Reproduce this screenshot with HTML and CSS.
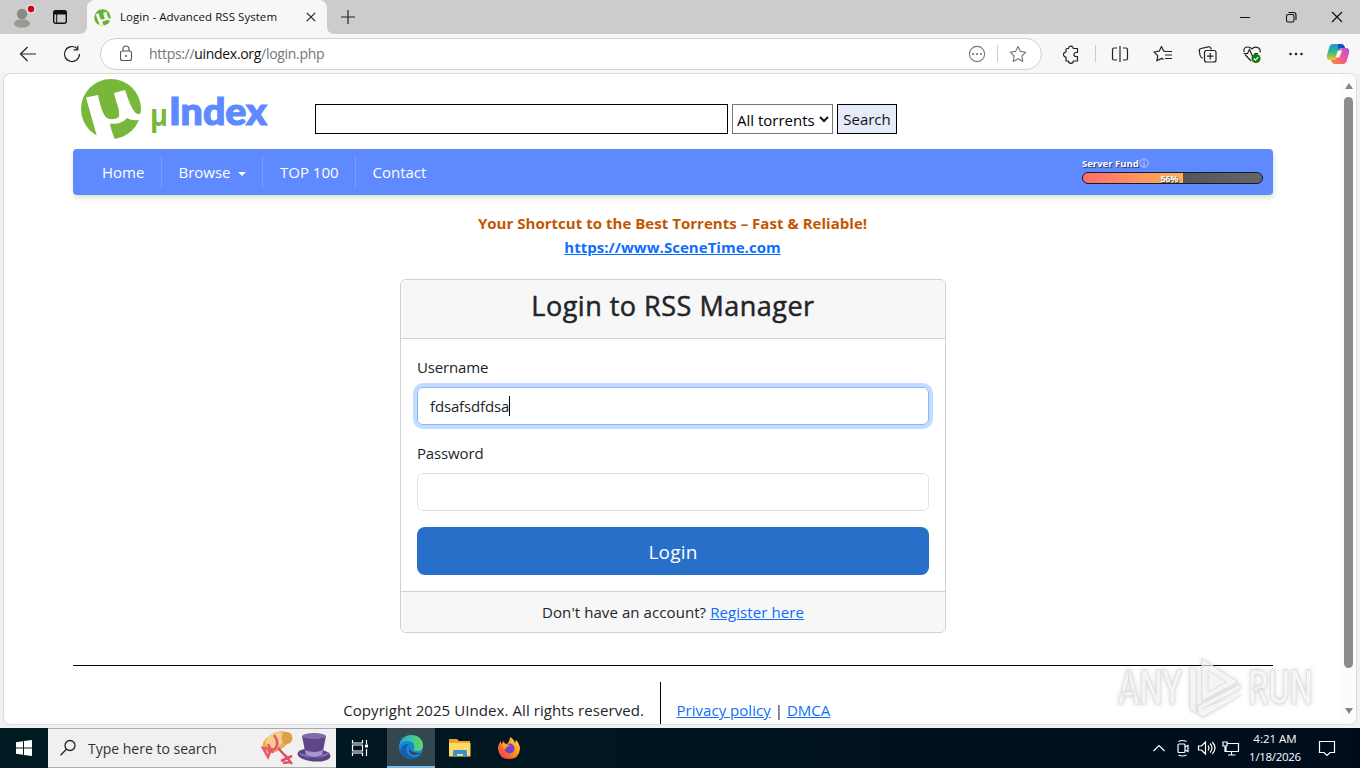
FILE: index.html
```html
<!DOCTYPE html>
<html lang="en">
<head>
    <meta charset="UTF-8">
    <meta name="viewport" content="width=device-width, initial-scale=1.0">
    <title>Login - Advanced RSS System</title>
    <link rel="stylesheet" href="styles.css">
</head>
<body>
    <div class="tab-strip">
        <div class="strip-left">
            <svg class="profile" width="28" height="28" viewBox="0 0 28 28">
                <circle cx="14" cy="11" r="5.2" fill="#8c8985"/>
                <ellipse cx="14" cy="20.5" rx="8" ry="4.3" fill="#9c9894"/>
                <circle cx="23" cy="6" r="4.8" fill="#dedede"/>
                <circle cx="23" cy="6" r="3.2" fill="#d0021b"/>
            </svg>
            <svg class="workspaces" width="16" height="16" viewBox="0 0 16 16">
                <rect x="1.7" y="1.7" width="12.6" height="12.6" rx="2" fill="none" stroke="#111" stroke-width="1.4"/>
                <path d="M2 2h12v3H2zM4.7 4v10" fill="#111" stroke="#111"/>
            </svg>
        </div>
        <div class="tab">
            <svg width="17" height="17" viewBox="0 0 62 62">
                <circle cx="31" cy="31" r="30" fill="#62b52b"/>
                <path d="M6 18L18 16Q21 36 28 38Q35 40 39 36Q35 24 34 13L46 11Q49 28 54 34Q57 37 62 35V41Q53 43 46 39Q40 46 30 45Q32 55 37 61L22 59Q12 38 6 18" fill="#f7f7f7"/>
            </svg>
            <span class="tab-title">Login - Advanced RSS System</span>
            <svg width="10" height="10" viewBox="0 0 10 10"><path d="M.8.8l8.4 8.4M9.2.8L.8 9.2" stroke="#222" stroke-width="1.2"/></svg>
        </div>
        <svg class="new-tab" width="14" height="14" viewBox="0 0 14 14"><path d="M7 0v14M0 7h14" stroke="#222" stroke-width="1.2"/></svg>
        <div class="window-buttons">
            <svg width="46" height="34" viewBox="0 0 46 34"><path d="M18 17.5h10" stroke="#111"/></svg>
            <svg width="46" height="34" viewBox="0 0 46 34"><g fill="none" stroke="#111" stroke-width="1.1"><rect x="18.5" y="14.5" width="7.5" height="7.5" rx="1.5"/><path d="M20.5 12.5h5q2.5 0 2.5 2.5v5"/></g></svg>
            <svg width="46" height="34" viewBox="0 0 46 34"><path d="M18 12l10 10M28 12L18 22" stroke="#111" stroke-width="1.2"/></svg>
        </div>
    </div>

    <div class="toolbar">
        <svg class="tool" viewBox="0 0 44 40"><path d="M30 20H15M21.5 13l-7 7 7 7" class="line"/></svg>
        <svg class="tool" viewBox="0 0 44 40"><path d="M29.5 20a7.5 7.5 0 1 1-2.4-5.5M27.8 11.8v4h-4.2" class="line"/></svg>
        <div class="address">
            <svg width="50" height="30" viewBox="0 0 50 30"><g fill="none" stroke="#555" stroke-width="1.1"><rect x="19.5" y="12" width="11" height="9.5" rx="2"/><path d="M22 12v-2a3 3 0 0 1 6 0v2"/></g><circle cx="25" cy="17" r="1" fill="#555"/></svg>
            <span class="url">https://<b>uindex.org</b>/login.php</span>
            <svg width="40" height="30" viewBox="0 0 40 30"><circle cx="20" cy="15" r="7.6" fill="none" stroke="#777" stroke-width="1.1"/><g fill="#666"><circle cx="16" cy="15" r="1"/><circle cx="20" cy="15" r="1"/><circle cx="24" cy="15" r="1"/></g></svg>
            <span class="divider"></span>
            <svg class="star" width="43" height="30" viewBox="0 0 43 30"><path d="M20 7.5l2.4 4.9 5.4.8-3.9 3.8.9 5.4-4.8-2.6-4.8 2.6.9-5.4-3.9-3.8 5.4-.8z" fill="none" stroke="#777" stroke-width="1.1" stroke-linejoin="round"/></svg>
        </div>
        <svg class="tool ext" viewBox="0 0 44 40"><path d="M18 14.5h1.5a2.4 2.4 0 1 1 4.8 0h4.2v4H27a2 2 0 1 0 0 4h1.5V27h-4.2a2.4 2.4 0 0 1-4.8 0H17v-4a2.5 2.5 0 1 1 0-5v-2.5q0-1 1-1z" class="line" stroke-linejoin="round"/></svg>
        <span class="divider"></span>
        <svg class="tool split" viewBox="0 0 44 40"><path d="M19 14h-3q-1.500 0-1.500 1.500v9q0 1.500 1.500 1.500h3M25 14h3q1.500 0 1.500 1.500v9q0 1.500-1.500 1.500h-3M22 12v16" class="line"/></svg>
        <svg class="tool" viewBox="0 0 44 40"><path d="M24 17.500l-2.200-.3-2.300-4.700-2.300 4.700-5.200.8 3.800 3.600-1 5.200 4.700-2.400 2 1M24 17.500h6M23 21h7M23 24.500h7" class="line" stroke-linejoin="round"/></svg>
        <svg class="tool" viewBox="0 0 44 40"><path d="M17 24h-1q-1.500-.5-2-3l-.7-4q-.3-2 1.700-2.500l7.500-1.700q2-.3 2.500 1.700l.3 1M19 16.500h9q2 0 2 2v7.500q0 2-2 2h-7.500q-2 0-2-2v-7.500q0-2 2-2M24.200 19v6.500M21 22.200h6.500" class="line"/></svg>
        <svg class="tool" viewBox="0 0 44 40"><path d="M21 27l-6-6.500M14 18q-1-5 4-5 2.500 0 4 2 2-2.500 5-1.700 4 1 3 5.200M13.500 19.500h4l2-4 3.500 8 2-4h3" class="line"/><circle cx="26" cy="24.500" r="4.600" fill="#107c10"/><path d="M23.800 24.500l1.600 1.700 2.800-3" fill="none" stroke="#fff" stroke-width="1.200"/></svg>
        <svg class="tool" viewBox="0 0 44 40"><g fill="#222"><circle cx="16.500" cy="20" r="1.300"/><circle cx="22" cy="20" r="1.300"/><circle cx="27.500" cy="20" r="1.300"/></g></svg>
        <svg class="copilot" width="40" height="40" viewBox="0 0 40 40">
            <defs>
                <linearGradient id="cpA" x1="0" y1="0" x2="0" y2="1"><stop offset="0" stop-color="#1793e8"/><stop offset=".5" stop-color="#35b98a"/><stop offset="1" stop-color="#f3c820"/></linearGradient>
                <linearGradient id="cpB" x1="0" y1="1" x2="1" y2="0"><stop offset="0" stop-color="#ff8b32"/><stop offset=".5" stop-color="#f0588d"/><stop offset="1" stop-color="#a858e8"/></linearGradient>
            </defs>
            <path d="M15 10h8q3 0 4 4h-3q-2 0-3 3l-2 6q-1 3-4 3h-3q-4 0-3-5l2-7q1-4 4-4z" fill="url(#cpA)"/>
            <path d="M20 10h3q3 0 4 4h-4q-2 0-3 2z" fill="#174ec4"/>
            <path d="M25 30h-8q-3 0-4-4h3q2 0 3-3l2-6q1-3 4-3h3q4 0 3 5l-2 7q-1 4-4 4z" fill="url(#cpB)"/>
            <path d="M20 16.500h4l-2.500 7h-4z" fill="#f7f7f7"/>
        </svg>
    </div>

    <div class="window">
        <div class="page">
            <div class="container">
                <div class="site-header">
                    <svg class="logo" width="200" height="70" viewBox="0 0 200 70">
                        <circle cx="38" cy="35" r="30" fill="#77b83b"/>
                        <path d="M13 23.500L25 21Q29 41 34 44Q40 47 46 43Q47 37 43 27L41 19L52 16Q57 32 62 38.500Q64 41 69 39V45Q61 48 54 44Q48 51 37 49.500Q38 56 42 66L33 68L25 66Q19 45 13 23.500" fill="#fff"/>
                        <text x="77" y="52" class="logo-mu" textLength="18" lengthAdjust="spacingAndGlyphs">µ</text>
                        <text x="96" y="51" class="logo-name" textLength="98" lengthAdjust="spacingAndGlyphs">Index</text>
                    </svg>
                    <form class="search">
                        <input type="text" class="search-text">
                        <div class="search-select"><span>All torrents</span><svg width="10" height="7" viewBox="0 0 10 7"><path d="M1 1l4 4 4-4" fill="none" stroke="#111" stroke-width="2"/></svg></div>
                        <button type="button" class="search-btn">Search</button>
                    </form>
                </div>

                <div class="navbar">
                    <a class="nav-home">Home</a>
                    <a class="nav-browse">Browse <i class="caret"></i></a>
                    <a class="nav-top">TOP 100</a>
                    <a class="nav-contact">Contact</a>
                    <div class="fund">
                        <div class="fund-title">Server Fund<svg width="10" height="10" viewBox="0 0 10 10"><circle cx="5" cy="5" r="4.200" fill="none" stroke="#cbd8ff" stroke-width=".8"/><path d="M5 4.500V8M5 2.200v1.200" stroke="#cbd8ff"/></svg></div>
                        <div class="fund-bar"><div class="fund-fill" style="width: 56%">56%</div></div>
                    </div>
                </div>

                <div class="promo">
                    <div>Your Shortcut to the Best Torrents – Fast &amp; Reliable!</div>
                    <a>https://www.SceneTime.com</a>
                </div>

                <div class="card">
                    <h3 class="card-header">Login to RSS Manager</h3>
                    <div class="card-body">
                        <label>Username</label>
                        <div class="field focused">fdsafsdfdsa<span class="cursor"></span></div>
                        <label>Password</label>
                        <div class="field"></div>
                        <button type="button" class="login-btn">Login</button>
                    </div>
                    <div class="card-footer">Don't have an account? <a>Register here</a></div>
                </div>

                <div class="footer">
                    <div class="copyright">Copyright 2025 UIndex. All rights reserved.</div>
                    <div class="footer-links"><a class="privacy">Privacy policy</a> | <a>DMCA</a></div>
                </div>
            </div>
        </div>
        <div class="scrollbar">
            <i class="arrow-up"></i>
            <div class="thumb"></div>
            <i class="arrow-down"></i>
        </div>
    </div>

    <svg class="watermark" width="220" height="70" viewBox="0 0 220 70">
        <g class="mark">
            <text x="4" y="49" textLength="64" lengthAdjust="spacingAndGlyphs">ANY</text>
            <text x="134" y="49" textLength="65" lengthAdjust="spacingAndGlyphs">RUN</text>
            <path d="M76 12v42l6 4V14zM88 4v42l36-19zM94 15v22l18-10zM88 54l38-20v-5L84 51v8l5 3 38-22"/>
        </g>
    </svg>

    <div class="taskbar">
        <div class="start"><svg width="16" height="16" viewBox="0 0 16 16"><path d="M0 2.200L7 1.200V7.500H0zM8 1L16 0V7.500H8zM0 8.500H7V14.800L0 13.800zM8 8.500H16V16L8 15z" fill="#fff"/></svg></div>
        <div class="task-search">
            <svg width="18" height="18" viewBox="0 0 18 18"><g fill="none" stroke="#222" stroke-width="1.300"><circle cx="11" cy="6.500" r="5"/><path d="M7.400 10.300L1.500 16.200"/></g></svg>
            <span>Type here to search</span>
            <svg class="hats" width="72" height="36" viewBox="0 0 72 36">
                <ellipse cx="16" cy="12" rx="15" ry="9" fill="#e9ad55" transform="rotate(-30 16 12)"/>
                <ellipse cx="15" cy="10" rx="10" ry="7" fill="#f5cf8b" transform="rotate(-35 15 10)"/>
                <ellipse cx="27" cy="8" rx="5.500" ry="6" fill="#dda04a"/>
                <path d="M14 5q6 8 1 14l-7 2M8 14l5 9M3 18l8 1-3 8z" fill="none" stroke="#e8576c" stroke-width="2.500"/>
                <path d="M18 18l11 12M21 31l11-5M25 25l7 9M23 33l8-1" stroke="#df4d68" stroke-width="2.500"/>
                <ellipse cx="54" cy="25" rx="16.500" ry="6.500" fill="#594184" transform="rotate(4 54 25)"/>
                <path d="M38 22q15 7 32 0-4 6-16 6t-16-6" fill="#8871b4"/>
                <path d="M42 6l4 20q8 4 16 0l4-20z" fill="#5d4788"/>
                <path d="M45 20q9 4 18 0l-1 5q-8 4-16 0z" fill="#a894cf"/>
                <ellipse cx="54" cy="6" rx="12" ry="3" fill="#806aa9"/>
            </svg>
        </div>
        <div class="task-app"><svg width="20" height="18" viewBox="0 0 20 18"><g fill="none" stroke="#fff" stroke-width="1.200"><path d="M2.500 1v3h10V1M2.500 17v-3h10v3M2.500 6h10v6h-10zM16.500 1v4M16.500 10v7"/></g><path d="M15 5.500h3v3h-3z" fill="#fff"/></svg></div>
        <div class="task-app active">
            <svg width="26" height="26" viewBox="0 0 26 26">
                <defs><linearGradient id="edgeTop"><stop offset="0" stop-color="#20a5df"/><stop offset="1" stop-color="#63d960"/></linearGradient></defs>
                <circle cx="13" cy="13" r="12" fill="#1687d6"/>
                <path d="M1 12Q3 1 14 1q11 1 11 11 0 5-6 5-4 0-3-2 2-8-8-8-5 1-7 5" fill="url(#edgeTop)"/>
                <path d="M11 10q-5 5-1 10 4 5 12 2-3 3-9 3Q4 25 2 17q2-8 9-7" fill="#155eae"/>
                <path d="M12 12q-2 7 11 7 1 0 1-1-6 5-11 2-3-3-1-8" fill="#36474f"/>
            </svg>
        </div>
        <div class="task-app"><svg width="24" height="20" viewBox="0 0 24 20"><path d="M1 1h8l2 2h11v15H1z" fill="#e9a52b"/><path d="M1 5h21.500v13.500H1z" fill="#ffd866"/><path d="M5 19v-6q0-1 1-1h12q1 0 1 1v6h-4v-3H9v3z" fill="#3594cf"/></svg></div>
        <div class="task-app"><svg width="24" height="24" viewBox="0 0 24 24"><defs><linearGradient id="fox" x1="1" y1="0" x2="0" y2="1"><stop offset="0" stop-color="#ffe34a"/><stop offset=".5" stop-color="#ff8b1d"/><stop offset="1" stop-color="#ee2660"/></linearGradient></defs><path d="M13 1q4 2 5 6l1-3q4 4 4 9-1 10-11 10Q2 23 1 13q0-5 3-8v3l3-3q0 3 3 3 3-3 3-7" fill="url(#fox)"/><circle cx="12.500" cy="12.500" r="5" fill="#7440cf"/><path d="M5 9q4-3 8 1-4 0-4 3-3 0-4-4" fill="#ff9f24"/></svg></div>
        <div class="tray">
            <svg width="24" height="24" viewBox="0 0 24 24"><path d="M6.500 15l5.500-5.500 5.500 5.500"/></svg>
            <svg width="24" height="24" viewBox="0 0 24 24"><rect x="7" y="8" width="7" height="8.500" rx="1"/><path d="M14 11l3-1.500v6L14 14M7.500 5.500q4-2 8 0M7.500 19q4 2 8 0"/></svg>
            <svg width="24" height="24" viewBox="0 0 24 24"><path d="M3.500 10h3l4-4v12l-4-4h-3zM13 9.500q2 2.500 0 5M15 7.500q4 4.500 0 9M17.300 6q5.400 6 0 12"/></svg>
            <svg width="24" height="24" viewBox="0 0 24 24"><path d="M8 7.500h11.500v8H7V11M12.500 15.500v3.500M9 19h7.500M4 6h4v4H4zM6 10v6"/></svg>
            <div class="clock"><span class="time">4:21 AM</span><span>1/18/2026</span></div>
            <svg class="notify" width="18" height="18" viewBox="0 0 18 18"><path d="M1.500 2.500h15v11h-4.500L9 16.500l-3-3H1.500z"/></svg>
        </div>
    </div>
</body>
</html>
```

FILE: styles.css
```css
* {
    box-sizing: border-box;
}

body {
    margin: 0;
    width: 1360px;
    height: 768px;
    overflow: hidden;
    display: flex;
    flex-direction: column;
    background: #f0f1f4;
    color: #212529;
    font-family: "Open Sans", "Noto Sans", sans-serif;
    font-size: 15px;
}

svg {
    flex-shrink: 0;
    display: block;
}

/* browser chrome */
.tab-strip {
    height: 34px;
    display: flex;
    align-items: center;
    background: #f7f7f7;
}

.tab-strip > * {
    background: #ccc;
}

.strip-left {
    width: 87px;
    height: 34px;
    display: flex;
    align-items: center;
    padding-left: 8px;
    gap: 16px;
    border-bottom-right-radius: 7px;
}

.tab {
    width: 240px;
    height: 34px;
    display: flex;
    align-items: center;
    padding: 0 11px 0 7px;
    background: #f7f7f7;
    border-radius: 8px 8px 0 0;
    box-shadow: 0 -8px 0 #ccc;
}

.tab-title {
    flex: 1;
    margin: -2px 0 0 9px;
    font-size: 11.5px;
    letter-spacing: 0.05px;
    color: #111;
}

.new-tab {
    box-sizing: content-box;
    padding: 10px 14px;
    border-bottom-left-radius: 7px;
}

.window-buttons {
    flex: 1;
    height: 34px;
    display: flex;
    justify-content: flex-end;
}

.toolbar {
    height: 39px;
    display: flex;
    align-items: center;
    padding-left: 6px;
    background: #f7f7f7;
}

.tool {
    width: 44px;
    height: 40px;
}

.ext {
    margin: 0 2px 0 7px;
}

.split {
    margin-left: 2px;
}

.line {
    fill: none;
    stroke: #222;
    stroke-width: 1.2;
}

.address {
    width: 942px;
    height: 32px;
    margin-left: 6px;
    display: flex;
    align-items: center;
    background: #fff;
    border: 1px solid #d0d0d0;
    border-radius: 16px;
}

.url {
    flex: 1;
    margin-left: -2px;
    font-size: 14px;
    letter-spacing: -0.31px;
    color: #767676;
}

.url b {
    font-weight: 400;
    color: #111;
}

.divider {
    width: 1px;
    height: 17px;
    background: #ccc;
}

.window {
    height: 652px;
    margin: 0 3px 3px;
    display: flex;
    overflow: hidden;
    background: #fff;
    border: 1px solid #dcdcdc;
    border-radius: 8px;
}

.page {
    flex: 1;
    display: flex;
    justify-content: center;
}

.container {
    width: 1200px;
}

.scrollbar {
    width: 15px;
    margin-left: -1px;
    display: flex;
    flex-direction: column;
    align-items: center;
    padding: 9px 0 10px;
    background: #fcfcfc;
}

.thumb {
    width: 9px;
    height: 571px;
    margin: 8px 0 auto;
    border-radius: 5px;
    background: #8b8b8b;
}

.arrow-up,
.arrow-down {
    border: 4.5px solid transparent;
    border-top-width: 0;
    border-bottom: 6px solid #858585;
}

.arrow-down {
    transform: rotate(180deg);
}

/* site header */
.site-header {
    height: 75px;
    display: flex;
}

.logo-mu {
    font-family: "Open Sans", sans-serif;
    font-size: 30px;
    font-weight: 700;
    fill: #77b83b;
}

.logo-name {
    font-family: Lato, sans-serif;
    font-size: 37px;
    font-weight: 900;
    fill: #5d8aff;
    stroke: #5d8aff;
    stroke-width: 1.2;
}

.search {
    height: 30px;
    margin: 30px 0 0 42px;
    display: flex;
}

.search-text {
    width: 413px;
    border: 1px solid #000;
    padding: 0;
}

.search-select {
    width: 101px;
    margin: 0 4px;
    padding: 1px 3px 0 4px;
    display: flex;
    align-items: center;
    justify-content: space-between;
    border: 1px solid #767676;
    color: #000;
}

.search-select span {
    white-space: nowrap;
}

.search-btn {
    width: 60px;
    padding: 0;
    border: 1px solid #000;
    background: #e5ebf9;
    color: #111;
    font: inherit;
}

.navbar {
    height: 46px;
    display: flex;
    align-items: center;
    padding: 0 10px 0 12px;
    background: #5f8aff;
    border-radius: 4px;
    box-shadow: 1px 3px 5px #d4e8d0;
    color: #fff;
}

.navbar > a {
    height: 34px;
    padding-left: 17px;
    line-height: 34px;
    border-right: 1px solid #789cff;
}

.navbar .nav-home {
    width: 77px;
}

.navbar .nav-browse {
    width: 101px;
    padding-left: 16.5px;
}

.navbar .nav-top {
    width: 93px;
}

.navbar .nav-contact {
    padding-left: 16.5px;
    border: 0;
}

.caret {
    display: inline-block;
    margin-left: 4px;
    vertical-align: 2px;
    border: 4px solid transparent;
    border-top-color: #fff;
    border-bottom: 0;
}

.fund {
    width: 181px;
    margin: -3px 0 0 auto;
}

.fund-title {
    height: 12px;
    display: flex;
    align-items: center;
    margin-bottom: 3px;
    font-size: 9.5px;
    font-weight: 700;
    text-shadow: 1px 1px 1px #1d3474;
}

.fund-bar {
    height: 12px;
    overflow: hidden;
    border: 1px solid #101a36;
    border-radius: 6px;
    background: linear-gradient(90deg, #414141, #666);
}

.fund-fill {
    height: 10px;
    padding-right: 5px;
    background: linear-gradient(90deg, #ff6e67, #ffb150);
    font-size: 9px;
    font-weight: 700;
    line-height: 11px;
    letter-spacing: -0.2px;
    text-align: right;
    text-shadow: 1px 1px 1px #333;
}

.promo {
    margin: 16px 1px 0 0;
    text-align: center;
    font-weight: 700;
    line-height: 24px;
    letter-spacing: 0.03px;
    color: #c35600;
}

a {
    color: inherit;
}

.promo a,
.card-footer a,
.footer a {
    color: #0d6efd;
    text-decoration: underline;
}

/* login form */
.card {
    width: 546px;
    margin: 20px auto 0;
    border: 1px solid #d0d1d2;
    border-radius: 6px;
    background: #fff;
    overflow: hidden;
}

.card-header {
    height: 59px;
    margin: 0;
    padding-top: 9px;
    border-bottom: 1px solid #d0d1d2;
    background: #f7f7f7;
    text-align: center;
    font-size: 27px;
    font-weight: 500;
    letter-spacing: 0.5px;
    line-height: 34px;
    -webkit-text-stroke: 0.5px #212529;
}

.card-body {
    height: 252px;
    padding: 16px;
}

.card-body label {
    display: block;
    height: 32px;
    line-height: 25px;
    letter-spacing: -0.15px;
}

.field {
    height: 38px;
    margin-bottom: 16px;
    padding: 0 12px;
    display: flex;
    align-items: center;
    border: 1px solid #dee2e6;
    border-radius: 6px;
    letter-spacing: -0.15px;
}

.focused {
    border-color: #86b7fe;
    box-shadow: 0 0 0 4px #c2dbfe;
}

.cursor {
    width: 1px;
    height: 20px;
    background: #000;
}

.login-btn {
    width: 100%;
    height: 48px;
    padding-top: 3px;
    border: 0;
    border-radius: 8px;
    background: #286fc9;
    color: #fff;
    font: inherit;
    font-size: 19px;
    letter-spacing: 0.2px;
}

.card-footer {
    height: 41px;
    border-top: 1px solid #d0d1d2;
    background: #f7f7f7;
    text-align: center;
    line-height: 40px;
    letter-spacing: 0.08px;
}

.footer {
    height: 60px;
    margin-top: 32px;
    padding-top: 16px;
    display: flex;
    border-top: 1px solid #000;
}

.copyright {
    width: 588px;
    padding: 16px 16px 0 0;
    border-right: 1px solid #000;
    text-align: right;
    line-height: 24px;
    letter-spacing: 0.08px;
}

.footer-links {
    padding: 16px 0 0 15.5px;
    line-height: 24px;
    letter-spacing: 0.03px;
}

.watermark {
    position: absolute;
    left: 1114px;
    top: 655px;
}

.mark {
    fill: rgba(255, 255, 255, 0.65);
    stroke: #dedede;
    stroke-width: 1;
    font-family: Roboto, sans-serif;
    font-size: 48px;
    font-weight: 500;
    filter: drop-shadow(0 0 2px rgba(0, 0, 0, 0.2));
}

/* taskbar */
.taskbar {
    height: 40px;
    display: flex;
    align-items: center;
    background: linear-gradient(90deg, #001a22, #001520 50%, #000c1c);
}

.start {
    width: 48px;
    display: flex;
    justify-content: center;
}

.task-search {
    width: 288px;
    height: 40px;
    display: flex;
    align-items: center;
    padding: 0 4px 0 11px;
    background: #f0f0f0;
    border: 1px solid #aaa;
    border-width: 1px 0;
    font-size: 14px;
    color: #333;
}

.task-search span {
    margin-left: 11px;
}

.hats {
    margin-left: auto;
}

.task-app {
    width: 48px;
    height: 40px;
    margin-right: 1px;
    display: flex;
    align-items: center;
    justify-content: center;
}

.task-app.active {
    margin-left: 2px;
    background: #34474e;
    border-bottom: 2px solid #76b9ed;
}

.tray {
    flex: 1;
    height: 40px;
    display: flex;
    align-items: center;
    justify-content: flex-end;
    padding-right: 24px;
    color: #fff;
}

.tray svg {
    fill: none;
    stroke: #fff;
    stroke-width: 1.2;
}

.clock {
    width: 64px;
    display: flex;
    flex-direction: column;
    align-items: center;
    font-size: 11.5px;
    line-height: 18px;
    letter-spacing: -0.3px;
}

.time {
    letter-spacing: 0;
}

.tray .notify {
    margin-left: 11px;
}
```
